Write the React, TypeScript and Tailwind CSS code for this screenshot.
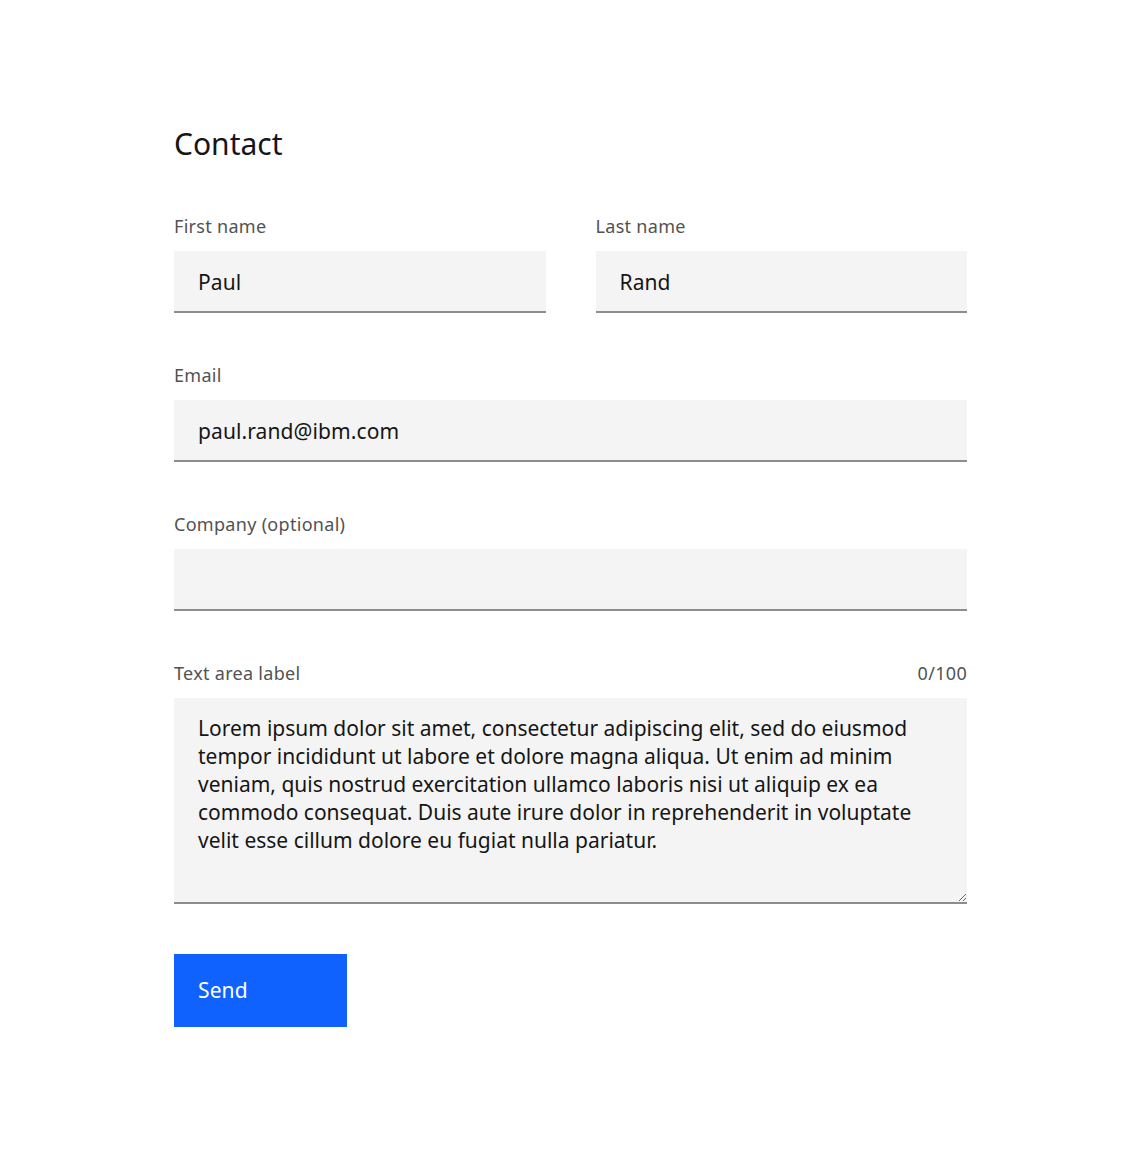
import React from "react";

const font = { fontFamily: '"Noto Sans", "Open Sans", sans-serif' };

const lorem =
  "Lorem ipsum dolor sit amet, consectetur adipiscing elit, sed do eiusmod tempor incididunt ut labore et dolore magna aliqua. Ut enim ad minim veniam, quis nostrud exercitation ullamco laboris nisi ut aliquip ex ea commodo consequat. Duis aute irure dolor in reprehenderit in voluptate velit esse cillum dolore eu fugiat nulla pariatur.";

function Field({ label, value }: { label: string; value?: string }) {
  return (
    <label className="flex flex-col">
      <span className="mb-[14px] text-[18px] leading-[22px] tracking-[0.3px] text-[#525252]">{label}</span>
      <input
        defaultValue={value}
        className="h-[62px] w-full border-b-2 border-[#8d8d8d] bg-[#f4f4f4] px-6 pt-[2px] text-[21px] tracking-[0.1px] text-[#161616] outline-none"
      />
    </label>
  );
}

export default function App() {
  return (
    <div className="min-h-[1152px] bg-white" style={font}>
      <form className="mx-auto flex w-[793px] flex-col pt-[124px]" onSubmit={(e) => e.preventDefault()}>
        <h1 className="text-[30px] leading-10 text-[#161616]">Contact</h1>

        <div className="mt-[51px] grid grid-cols-2 gap-x-[50px]">
          <Field label="First name" value="Paul" />
          <Field label="Last name" value="Rand" />
        </div>

        <div className="mt-[51px]">
          <Field label="Email" value="paul.rand@ibm.com" />
        </div>

        <div className="mt-[51px]">
          <Field label="Company (optional)" />
        </div>

        <div className="mt-[51px] flex flex-col">
          <div className="mb-[14px] flex items-center justify-between text-[18px] leading-[22px] tracking-[0.3px] text-[#525252]">
            <span>Text area label</span>
            <span>0/100</span>
          </div>
          <textarea
            defaultValue={lorem}
            className="block h-[206px] w-full resize-y border-b-2 border-[#8d8d8d] bg-[#f4f4f4] px-6 pt-4 text-[21px] leading-7 text-[#161616] outline-none"
          />
        </div>

        <div className="mt-[50px]">
          <button
            type="submit"
            className="h-[73px] w-[173px] bg-[#0f62fe] px-6 text-left text-[21px] tracking-[0.1px] text-white"
          >
            Send
          </button>
        </div>
      </form>
    </div>
  );
}
